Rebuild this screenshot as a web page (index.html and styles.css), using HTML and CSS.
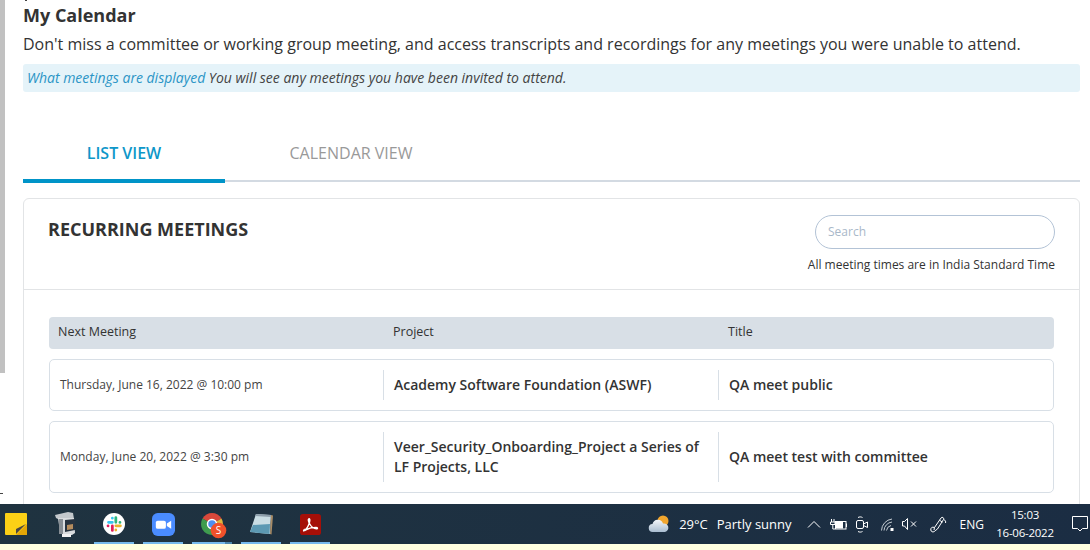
FILE: index.html
```html
<!DOCTYPE html>
<html lang="en">
<head>
    <meta charset="UTF-8">
    <meta name="viewport" content="width=device-width, initial-scale=1.0">
    <title>My Calendar</title>
    <link rel="stylesheet" href="styles.css">
</head>
<body>
    <div class="screen">
        <div class="scrollbar"></div>
        <div class="tick tick-top"></div>
        <div class="tick tick-side"></div>
        <main class="page">
            <h1>My Calendar</h1>
            <p class="intro">Don't miss a committee or working group meeting, and access transcripts and recordings for any meetings you were unable to attend.</p>
            <div class="notice"><span class="notice-title">What meetings are displayed</span> You will see any meetings you have been invited to attend.</div>

            <div class="tabs">
                <div class="tab active">LIST VIEW</div>
                <div class="tab">CALENDAR VIEW</div>
            </div>

            <section class="card">
                <div class="card-head">
                    <h2>RECURRING MEETINGS</h2>
                    <div class="search-box">
                        <div class="search">Search</div>
                        <div class="tz">All meeting times are in India Standard Time</div>
                    </div>
                </div>
                <div class="card-body">
                    <div class="table-head">
                        <div>Next Meeting</div>
                        <div>Project</div>
                        <div>Title</div>
                    </div>
                    <div class="row">
                        <div class="cell date">Thursday, June 16, 2022 @ 10:00 pm</div>
                        <div class="cell name">Academy Software Foundation (ASWF)</div>
                        <div class="cell name">QA meet public</div>
                    </div>
                    <div class="row tall">
                        <div class="cell date">Monday, June 20, 2022 @ 3:30 pm</div>
                        <div class="cell name">Veer_Security_Onboarding_Project a Series of LF Projects, LLC</div>
                        <div class="cell name">QA meet test with committee</div>
                    </div>
                </div>
            </section>
        </main>
    </div>

    <footer class="taskbar">
        <div class="apps">
            <!-- sticky notes -->
            <div class="app">
                <svg width="22" height="22" viewBox="0 0 22 22"><rect width="22" height="22" rx="1" fill="#fcd116"/><path d="M22 11v10a1 1 0 0 1-1 1H11z" fill="#e3a606"/><path d="M11 16l10-5-10 10z" fill="#4b4742"/></svg>
            </div>
            <!-- camcorder -->
            <div class="app">
                <svg width="21" height="25" viewBox="0 0 21 25"><path d="M0 3l13-3 5 1 1 6H3L1 6z" fill="#c3c8cc"/><path d="M3 6h16l1 15-3 2H8l-3-3z" fill="#d9dcde"/><rect x="4" y="7" width="4" height="15" fill="#878e94"/><path d="M10 8l10-1v11l-10 2z" fill="#27333f"/><path d="M12 13l6-1v5l-6 1z" fill="#b58d5e"/><rect x="7" y="22" width="9" height="3" fill="#f2f2f2"/></svg>
            </div>
            <!-- slack -->
            <div class="app running">
                <svg width="22" height="22" viewBox="0 0 24 24"><circle cx="12" cy="12" r="12" fill="#fff"/><g fill="none" stroke-width="3" stroke-linecap="round"><path d="M6 10.200h4.200M10.200 5.500v.1" stroke="#36c5f0"/><path d="M14 5v5.200M18.500 10.200v.1" stroke="#2eb67d"/><path d="M10.200 14v5M5.500 14v.1" stroke="#e01e5a"/><path d="M14 14h5M14 18.500v.1" stroke="#ecb22e"/></g></svg>
            </div>
            <!-- zoom -->
            <div class="app running">
                <svg width="23" height="23" viewBox="0 0 24 24"><rect width="24" height="24" rx="6" fill="#4a8cff"/><rect x="4" y="8" width="10.500" height="8.500" rx="2" fill="#fff"/><path d="M15.500 11l4.500-3v8.500l-4.500-3z" fill="#fff"/></svg>
            </div>
            <!-- chrome with profile badge -->
            <div class="app running chrome">
                <svg width="26" height="26" viewBox="0 0 26 26"><path d="M11 11L1.500 5.500A11 11 0 0 1 20.500 5.500z" fill="#d9483b"/><path d="M11 11l9.500-5.500A11 11 0 0 1 11 22z" fill="#e3b53c"/><path d="M11 11v11A11 11 0 0 1 1.500 5.500z" fill="#3f9c4f"/><circle cx="11" cy="11" r="4.500" fill="#4f8ff0" stroke="#fff" stroke-width="1.500"/><circle cx="17.500" cy="17.500" r="7.800" fill="#f0512a"/><text x="17.500" y="21" text-anchor="middle" class="badge-s">S</text></svg>
            </div>
            <!-- notepad -->
            <div class="app running">
                <svg width="23" height="22" viewBox="0 0 23 22"><path d="M6 1l15 1-1 19L0 19z" fill="#c9dde4"/><path d="M3 12l17-1-.500 10L0 19z" fill="#5c99b3"/><path d="M6 1l15 1-.2 2L5 3z" fill="#8c9daa"/><path d="M21 2l2 .500-1.500 19-1.500-.500z" fill="#a98c66"/></svg>
            </div>
            <!-- acrobat -->
            <div class="app running">
                <svg width="21" height="21" viewBox="0 0 22 22"><rect width="22" height="22" rx="3" fill="#a50f08"/><path d="M4 17.500c2.500-1 5-5.500 6-9 .6-2.200.2-4-.8-3.500-1 .5-.4 3 1 5.500 1.700 3 4.800 5 7 5 1.500 0 1.500-1.500-.5-1.500-3.500 0-7.500 1-10.500 2.500-1.700.9-3 1.500-2.200.5z" fill="none" stroke="#fff" stroke-width="1.500"/></svg>
            </div>
        </div>

        <div class="tray">
            <div class="weather">
                <svg width="22" height="18" viewBox="0 0 22 18"><defs><linearGradient id="cloud" x1="0" y1="0" x2="0" y2="1"><stop offset="0" stop-color="#f2f5f8"/><stop offset="1" stop-color="#a9bdd0"/></linearGradient></defs><circle cx="15" cy="6" r="5.500" fill="#f0a52e"/><path d="M5 17a4 4 0 0 1-.5-8A5.500 5.500 0 0 1 15 8.500a4.300 4.300 0 0 1 2 8.500z" fill="url(#cloud)"/></svg>
                <span>29°C</span>
                <span>Partly sunny</span>
            </div>
            <svg class="ic-up" width="14" height="8" viewBox="0 0 14 8"><path d="M1 7.500l6-6 6 6" fill="none" stroke="#fff"/></svg>
            <svg class="ic-battery" width="17" height="11" viewBox="0 0 17 11"><path d="M1.500 0v3M4 0v3M.5 3h4.500v2.500H.5zM2.800 5.500V10H5" fill="none" stroke="#fff"/><rect x="5.500" y="2.500" width="10.500" height="7.500" fill="none" stroke="#fff"/><rect x="6" y="3" width="7" height="6.500" fill="#fff"/><rect x="16" y="4.500" width="1" height="3.500" fill="#fff"/></svg>
            <svg class="ic-camera" width="12" height="17" viewBox="0 0 12 17"><rect x=".5" y="4.500" width="7" height="8" rx="1.500" fill="none" stroke="#fff"/><path d="M7.500 8l4-2v5.500l-4-2M2 1.500c1.500-.8 3-.8 4.500 0M2 15.500c1.500.8 3 .8 4.500 0" fill="none" stroke="#fff"/></svg>
            <svg class="ic-wifi" width="13" height="13" viewBox="0 0 13 13"><path d="M.5 12.500A12 12 0 0 1 11 1M3 12.500A9 9 0 0 1 11 4M5.500 12.500A6 6 0 0 1 10 7.500" fill="none" stroke="#c5ccd2"/><path d="M9.500 10h3v3h-3z" fill="#fff"/></svg>
            <svg class="ic-sound" width="15" height="12" viewBox="0 0 15 12"><path d="M.5 3.500v4.500h2l3 3.500V.5l-3 3z" fill="none" stroke="#fff"/><path d="M9 3.500l5 5M14 3.500l-5 5" stroke="#fff"/></svg>
            <svg class="ic-pen" width="17" height="17" viewBox="0 0 17 17"><path d="M4.500 11.500L11 2c1-1.500 3.300-.4 2.600 1.300L7.500 13M9.500 4.200l3 2M13.700 3.500c1.800.8 2.300 2 1.800 3.500M4.500 11.500l-.5 2.500M4.500 11.500C2 10.500.5 12 .8 14c.2 1.700 2 2.500 3.500 1.500 1.200-.8 2-2 3.200-2.500" fill="none" stroke="#fff"/></svg>
            <div class="lang">ENG</div>
            <div class="clock">
                <div>15:03</div>
                <div>16-06-2022</div>
            </div>
            <svg class="chat" width="16" height="16" viewBox="0 0 16 16"><path d="M.5 .5h15v12h-5L8 15l-2.500-2.500h-5z" fill="none" stroke="#fff"/></svg>
        </div>
    </footer>
    <div class="strip"></div>
</body>
</html>
```

FILE: styles.css
```css
html, body {
    margin: 0;
    padding: 0;
    height: 550px;
    overflow: hidden;
}
body {
    font-family: "Open Sans", sans-serif;
    background-color: #fff;
    color: #333;
}
.screen {
    position: relative;
    display: flex;
    height: 504px;
    overflow: hidden;
}
.scrollbar {
    width: 5px;
    height: 373px;
    background: #c1c1c1;
    flex: none;
}
.tick {
    position: absolute;
    background: #444;
}
.tick-top {
    left: 25px;
    top: 0;
    width: 2px;
    height: 1px;
}
.tick-side {
    left: 0;
    top: 493px;
    width: 3px;
    height: 1px;
}
.page {
    width: 1057px;
    margin-left: 18px;
    flex: none;
}
h1 {
    margin: 0;
    padding-top: 4px;
    font-size: 18px;
    line-height: 22px;
    font-weight: 700;
    color: #333;
}
.intro {
    margin: 7px 0 0;
    font-size: 16px;
    line-height: 22px;
    color: #333;
    white-space: nowrap;
}
.notice {
    margin-top: 9px;
    height: 28px;
    line-height: 28px;
    padding-left: 4px;
    background: #e5f3f9;
    border-radius: 3px;
    font-size: 14px;
    font-style: italic;
    color: #444;
}
.notice-title {
    color: #2b95c6;
}
.tabs {
    display: flex;
    margin-top: 39px;
    height: 49px;
    border-bottom: 2px solid #d3dae2;
}
.tab {
    width: 202px;
    height: 52px;
    line-height: 44px;
    text-align: center;
    font-size: 16px;
    color: #999;
    box-sizing: border-box;
}
.tab.active {
    color: #0e97c9;
    font-weight: 600;
    border-bottom: 4px solid #0094c8;
}
.tab + .tab {
    width: 252px;
}
.card {
    margin-top: 16px;
    border: 1px solid #e2e4e6;
    border-radius: 6px;
    background: #fff;
}
.card-head {
    display: flex;
    justify-content: space-between;
    height: 90px;
    padding: 0 24px;
    border-bottom: 1px solid #e2e4e6;
}
h2 {
    margin: 18px 0 0;
    font-size: 18px;
    line-height: 24px;
    font-weight: 700;
    color: #333;
}
.search-box {
    padding-top: 16px;
    text-align: right;
}
.search {
    width: 240px;
    height: 34px;
    line-height: 32px;
    margin-left: auto;
    padding-left: 12px;
    box-sizing: border-box;
    text-align: left;
    border: 1px solid #b3c3d6;
    border-radius: 17px;
    font-size: 12px;
    color: #a9b8c9;
}
.tz {
    margin-top: 8px;
    font-size: 12px;
    line-height: 16px;
    color: #333;
}
.card-body {
    padding: 27px 25px 40px;
}
.table-head {
    display: grid;
    grid-template-columns: 335px 335px 1fr;
    height: 32px;
    line-height: 30px;
    padding-left: 9px;
    background: #d8dfe6;
    border-radius: 4px;
    font-size: 12.500px;
    color: #333;
}
.row {
    display: grid;
    grid-template-columns: 333px 335px 1fr;
    align-items: center;
    height: 52px;
    margin-top: 10px;
    box-sizing: border-box;
    border: 1px solid #d8dfe6;
    border-radius: 5px;
}
.row.tall {
    height: 72px;
}
.cell {
    box-sizing: border-box;
    display: flex;
    align-items: center;
    height: 30px;
    padding: 0 10px;
}
.tall .cell {
    height: 50px;
}
.cell.name {
    border-left: 1px solid #d8dfe6;
    font-size: 14px;
    line-height: 20px;
    font-weight: 600;
    color: #333;
}
.cell.date {
    font-size: 12px;
    color: #444;
    padding-bottom: 1px;
}
.taskbar {
    display: flex;
    justify-content: space-between;
    height: 40px;
    background: linear-gradient(90deg, #1f3340, #1b2d43);
    color: #fff;
    font-size: 13px;
}
.apps {
    display: flex;
}
.app {
    display: flex;
    align-items: center;
    justify-content: center;
    width: 40px;
    margin-left: 9px;
    height: 40px;
    box-sizing: border-box;
}
.app:first-child {
    margin-left: -4px;
}
.app.running {
    padding-top: 2px;
    border-bottom: 2px solid #76b9ed;
}
.app.chrome svg {
    margin: 4px 0 0 4px;
}
.chrome {
    border-image: linear-gradient(90deg, #76b9ed 80%, #4d87ad 80%) 1;
}
.badge-s {
    font-size: 10px;
    fill: #fff;
}
.tray {
    display: flex;
    align-items: center;
    padding-right: 2px;
}
.weather {
    display: flex;
    align-items: center;
    gap: 9px;
}
.ic-up { margin-left: 15px; }
.ic-battery { margin-left: 9px; }
.ic-camera { margin-left: 9px; }
.ic-wifi { margin-left: 13px; }
.ic-sound { margin-left: 8px; }
.ic-pen { margin-left: 13px; }
.lang {
    margin-left: 13px;
    font-size: 12px;
}
.clock {
    margin-left: 10px;
    width: 62px;
    text-align: center;
    font-size: 11.500px;
    letter-spacing: -0.25px;
    line-height: 18px;
    white-space: nowrap;
}
.chat {
    margin-left: 16px;
}
.strip {
    height: 6px;
    background: #ffffe0;
}
```
